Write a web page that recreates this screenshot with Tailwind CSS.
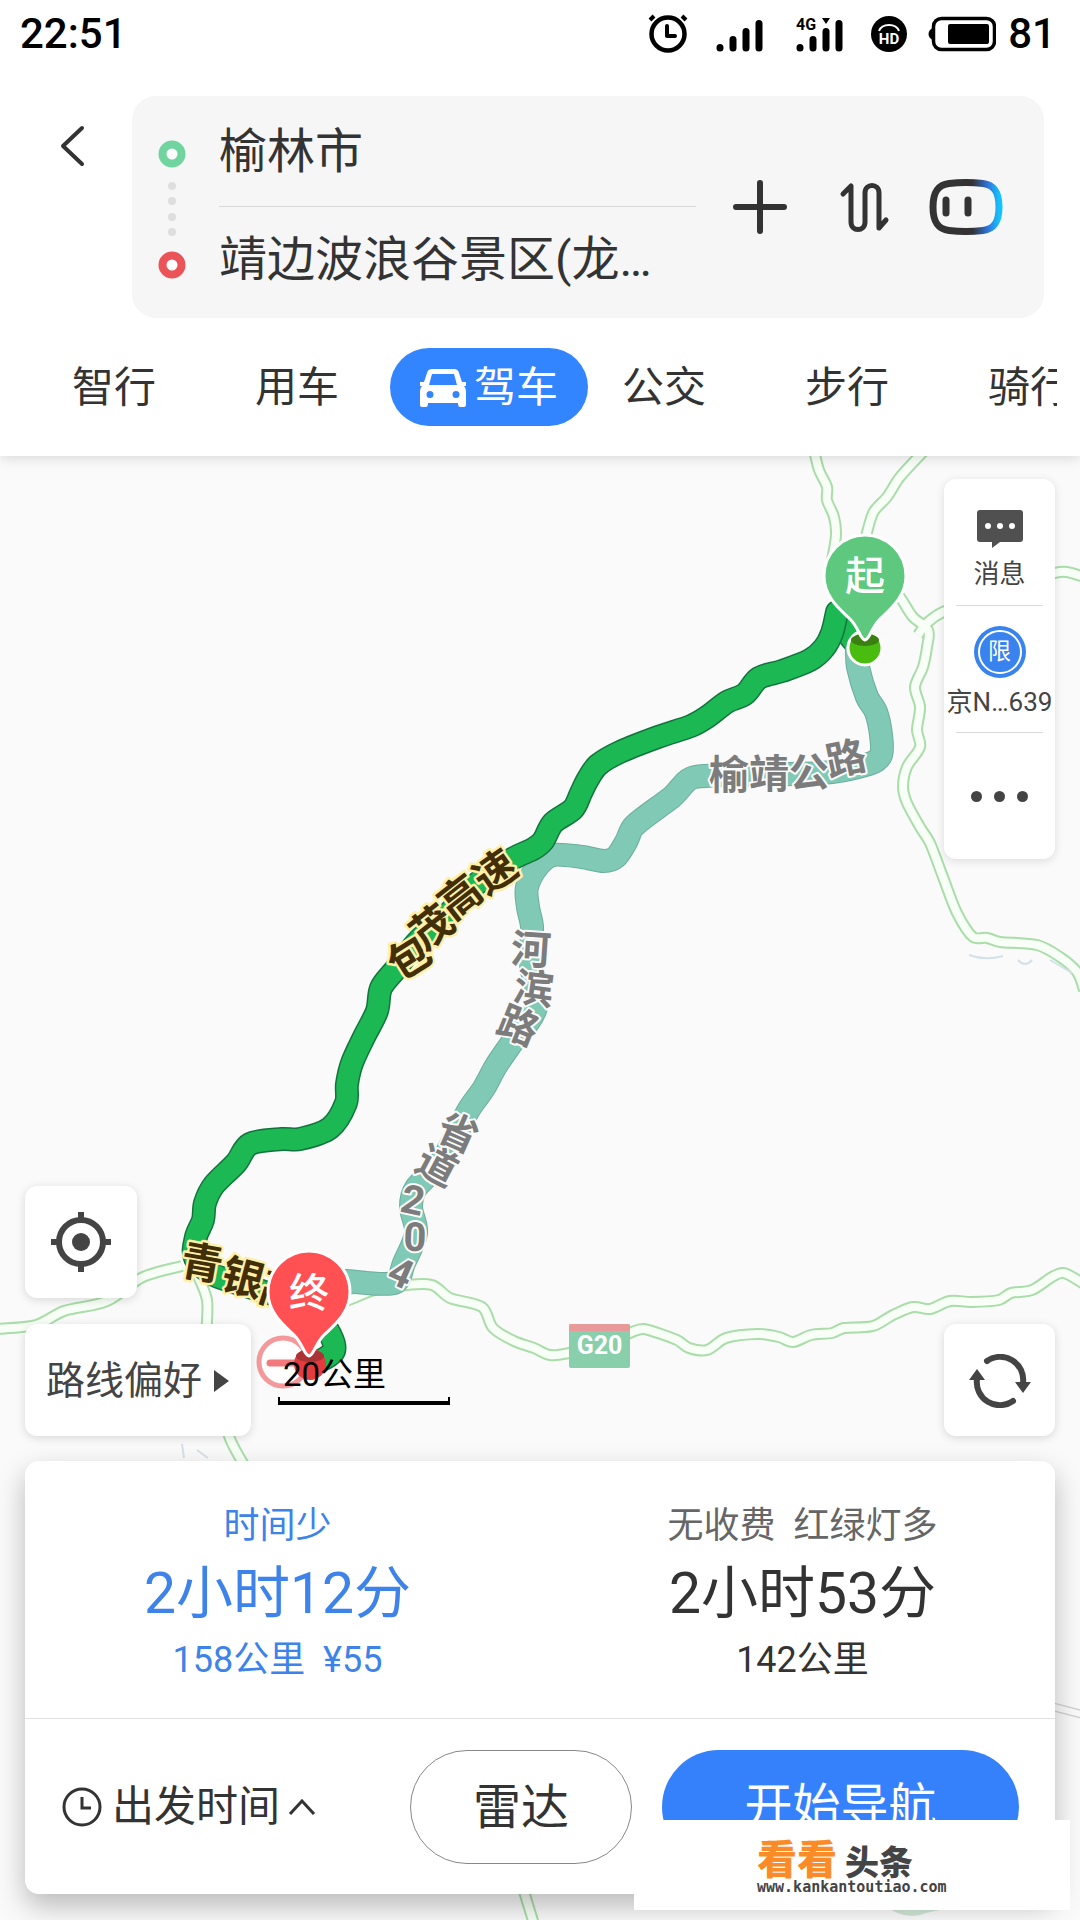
<!DOCTYPE html>
<html lang="zh-CN">
<head>
<meta charset="utf-8">
<meta name="viewport" content="width=device-width, initial-scale=1">
<title>驾车路线</title>
<script src="https://cdn.jsdelivr.net/npm/@tailwindcss/browser@4"></script>
</head>
<body class="bg-white font-[Roboto,'Noto_Sans_CJK_SC',sans-serif] text-[#333]">
<div class="relative flex min-h-screen flex-col overflow-hidden">

  <header class="relative z-10 bg-white pb-[30px] shadow-[0_2px_12px_rgba(0,0,0,0.14)]">
    <!-- status bar -->
    <div class="flex h-[66px] items-center pt-[2px] pr-[24px] pl-[20px] text-[42px] leading-none font-medium text-black">
      <time>22:51</time>
      <div class="ml-auto flex items-center">
        <svg class="mr-[28px] h-[40px] w-[40px]" viewBox="0 0 40 40" fill="none" stroke="#000"><circle cx="20" cy="20" r="16.500" stroke-width="4.500"/><path d="M19 12v10h8" stroke-width="4" stroke-linecap="round" stroke-linejoin="round"/><path d="M2 6l4-4M38 6l-4-4" stroke-width="4"/></svg>
        <svg class="mr-[33px] h-[40px] w-[47px]" viewBox="0 0 47 40" stroke="#000" stroke-width="7" stroke-linecap="round"><path d="M4 33.500v.5M17 25.500v8.500M30 17.500v16.500M43 9.500v24.500"/></svg>
        <svg class="mr-[28px] h-[40px] w-[47px]" viewBox="0 0 47 40"><path d="M4 33.500v.5M17 25.500v8.500M30 17.500v16.500M43 9.500v24.500" stroke="#000" stroke-width="7" stroke-linecap="round"/><path d="M26 4h8l-4 6z"/><text x="0" y="16" font-size="16" font-weight="700">4G</text></svg>
        <svg class="mr-[21px] h-[36px] w-[36px]" viewBox="0 0 36 36"><circle cx="18" cy="18" r="18"/><path d="M8 15c3-8 17-8 20 0" fill="none" stroke="#fff" stroke-width="2"/><text x="18" y="28" font-size="15" font-weight="700" fill="#fff" text-anchor="middle">HD</text></svg>
        <svg class="mr-[12px] h-[36px] w-[68px]" viewBox="0 0 68 36"><path d="M5 12c-6 2-6 10 0 12z"/><rect x="5.500" y="2.500" width="61" height="31" rx="8" fill="none" stroke="#000" stroke-width="3.500"/><rect x="20" y="8" width="41" height="20" rx="2"/></svg>
        <span>81</span>
      </div>
    </div>

    <!-- route endpoints -->
    <div class="mt-[30px] flex items-start pr-[36px]">
      <button aria-label="返回" class="flex h-[100px] w-[132px] items-center pl-[58px]"><svg class="h-[44px] w-[30px]" viewBox="0 0 30 44" fill="none" stroke="#333" stroke-width="4" stroke-linecap="round" stroke-linejoin="round"><path d="M24 4L5 22l19 18"/></svg></button>
      <div class="flex h-[222px] flex-1 items-center rounded-[24px] bg-[#f6f6f6] pr-[41px] pl-[24px]">
        <svg class="h-[150px] w-[32px] shrink-0" viewBox="0 0 32 150"><circle cx="16" cy="22" r="9.500" fill="#fff" stroke="#70d49f" stroke-width="8"/><g fill="#dedede"><circle cx="16" cy="54" r="4"/><circle cx="16" cy="69" r="4"/><circle cx="16" cy="85" r="4"/><circle cx="16" cy="100" r="4"/></g><circle cx="16" cy="133" r="9.500" fill="#fff" stroke="#ea5357" stroke-width="8"/></svg>
        <div class="ml-[31px] min-w-0 flex-1">
          <input aria-label="起点" value="榆林市" class="block h-[110px] w-full border-b border-[#d9d9d9] bg-transparent pb-[10px] text-[48px] outline-none">
          <input aria-label="终点" value="靖边波浪谷景区(龙…" class="block h-[110px] w-full bg-transparent pb-[14px] text-[48px] outline-none">
        </div>
        <button aria-label="添加途经点" class="ml-[36px]"><svg class="h-[56px] w-[56px]" viewBox="0 0 56 56" stroke="#333" stroke-width="6" stroke-linecap="round"><path d="M28 4v48M4 28h48"/></svg></button>
        <button aria-label="交换起终点" class="ml-[50px]"><svg class="h-[52px] w-[52px]" viewBox="0 0 52 52" fill="none" stroke="#333" stroke-width="5" stroke-linecap="round" stroke-linejoin="round"><path d="M5 13l8-8v36c0 10 14 10 14 0V12c0-10 14-10 14 0v35l7-8"/></svg></button>
        <button aria-label="语音助手" class="ml-[39px]"><svg class="h-[56px] w-[74px]" viewBox="0 0 74 56" fill="none"><defs><linearGradient id="ring"><stop offset=".6" stop-color="#333"/><stop offset=".83" stop-color="#2f73dc"/><stop offset="1" stop-color="#16c1fa"/></linearGradient></defs><path d="M20 4.500Q37 2.500 54 4.500C66 6 70 14 70 28s-4 22-16 23.500q-17 2-34 0C8 50 4 42 4 28S8 6 20 4.500z" stroke="url(#ring)" stroke-width="7"/><path d="M17 21v13M39 21v13" stroke="#333" stroke-width="7" stroke-linecap="round"/></svg></button>
      </div>
    </div>

    <!-- travel modes -->
    <nav class="mt-[30px] mr-[23px] flex h-[78px] items-center overflow-hidden pl-[72px] text-[42px] leading-none whitespace-nowrap">
      <div class="flex shrink-0 gap-[99px]"><button class="pt-[2px]">智行</button><button class="pt-[2px]">用车</button></div>
      <button class="ml-[51px] flex h-[78px] w-[198px] shrink-0 items-center justify-center gap-[8px] rounded-full bg-[#3385ff] pt-[2px] text-white">
        <svg class="h-[40px] w-[46px]" viewBox="0 0 46 40" fill="#fff"><path fill-rule="evenodd" d="M12 1h22q4 0 5 4l3 9h4v4h-2q2 2 2 5v14q0 2-2 2h-4q-2 0-2-4H8q0 4-2 4H3q-3 0-3-2V23q0-3 2-5H0v-4h4l3-9q1-4 5-4zm0 5L9 17h28L34 6zM10 23a3.500 3.500 0 100 7 3.500 3.500 0 000-7zm26 0a3.500 3.500 0 100 7 3.500 3.500 0 000-7z"/></svg>
        驾车</button>
      <div class="ml-[34px] flex shrink-0 gap-[99px]"><button class="pt-[2px]">公交</button><button class="pt-[2px]">步行</button><button class="pt-[2px]">骑行</button></div>
    </nav>
  </header>

  <main class="relative flex flex-1 flex-col bg-[#fafafa] px-[25px] pt-[23px] pb-[26px]">
    <svg class="absolute inset-0 h-full w-full" viewBox="0 456 1080 1464" preserveAspectRatio="xMidYMid slice" aria-label="路线地图">
      <defs>
        <g id="roads" fill="none" stroke-linejoin="round">
          <path data-curve d="M814 450L819 470 827 487 827 500 834 517 836 535 832 560"/>
          <path data-curve d="M925 450L900 477 887 497 873 513 864 545"/>
          <path data-curve d="M895 590L902 600 913 617 928 630 927 647 923 667 915 687 920 707 917 730 920 747 907 767 903 787 907 803 920 827 930 843 943 877 957 913 973 937 987 938 1000 942 1037 945 1060 957 1077 972 1084 990"/>
          <path data-curve d="M918 635L927 623 943 612 1000 590 1055 573 1067 572 1084 577"/>
          <path data-curve d="M-4 1329L36 1325 64 1311 107 1301 143 1277 182 1266"/>
          <path data-curve d="M196 1272L207 1300 207 1340 220 1400 229 1436 236 1451 250 1475"/>
          <path data-curve d="M310 1310L346 1301 375 1290 407 1285 432 1285 450 1298 482 1307 493 1328 514 1341 534 1348 550 1355 569 1353 600 1345 632 1332 644 1329 677 1340 689 1348 707 1350 726 1338 758 1334 779 1337 793 1342 811 1335 832 1333 844 1328 873 1326 893 1315 913 1307 930 1309 950 1301 971 1302 999 1300 1011 1293 1032 1290 1052 1277 1064 1273 1084 1284"/>
          <path d="M522 1885L534 1924"/>
        </g>
        <path data-curve id="fast" d="M837 612L832 633 824 648 810 660 782 671 759 678 745 694 727 702 707 717 691 726 658 737 620 752 598 765 588 779 581 793 573 809 553 823 543 841 533 849 514 858 474 886 450 912 419 940 395 970 381 988 377 1011 364 1037 352 1063 347 1084 346 1103 330 1128 300 1139 282 1139 250 1144 236 1163 214 1185 205 1203 203 1220 196 1237 195 1258 214 1275 264 1292 316 1315 331 1336 334 1351 322 1360"/>
        <path data-curve id="slow" d="M857 650L858 667 867 697 876 712 881 735 881 755 869 764 822 773 695 777 672 797 634 826 626 842 616 857 604 861 582 857 553 855 538 866 527 887 528 907 532 927 531 963 536 1007 511 1044 496 1066 484 1088 468 1111 443 1159 416 1188 411 1207 416 1233 404 1263 394 1283 346 1281"/>
      </defs>
      <use href="#roads" stroke="#a9dda9" stroke-width="12"/>
      <use href="#roads" stroke="#f8fff6" stroke-width="8"/>
      <path d="M1050 1706l34 9" stroke="#d2d2d2" stroke-width="9"/><path d="M1050 1706l34 9" stroke="#fafafa" stroke-width="6"/>
      <g fill="none" stroke="#d5e1ea" stroke-width="2"><path d="M969 955q16 6 34 1M1018 960q7 8 14 0M1050 960l22 13M182 1444l2 14M197 1450l11 8"/></g>
      <path d="M884 1905h72q-14 5-30 8-20 9-42-8z" fill="#cfe6d5"/>

      <g fill="none" stroke-linejoin="round" stroke-linecap="round">
        <path d="M850 615L848 636 858 648" stroke="#127b43" stroke-width="22"/><path d="M850 615L848 636 858 648" stroke="#1cb854" stroke-width="19"/>
        <use href="#slow" stroke="#6bae9e" stroke-width="24"/>
        <use href="#slow" stroke="#80c9b5" stroke-width="22"/>
        <use href="#fast" stroke="#12743d" stroke-width="24"/>
        <use href="#fast" stroke="#1cb854" stroke-width="21"/>
      </g>

      <g font-size="40" font-weight="700" fill="#7c7c7c" stroke="#fafafa" stroke-width="4" stroke-linejoin="round" paint-order="stroke" text-anchor="middle">
        <text transform="translate(729 775)" y="14">榆</text><text transform="translate(769 774)" y="14">靖</text><text transform="translate(809 773) rotate(-3)" y="14">公</text><text transform="translate(846 759) rotate(-12)" y="14">路</text>
        <text transform="translate(531 950) rotate(4)" y="14">河</text><text transform="translate(534 989) rotate(8)" y="14">滨</text><text transform="translate(518 1026) rotate(22)" y="14">路</text>
        <text transform="translate(458 1133) rotate(24)" y="14">省</text><text transform="translate(437 1166) rotate(28)" y="14">道</text><text transform="translate(413 1200) rotate(12)" y="14">2</text><text transform="translate(415 1237) rotate(2)" y="14">0</text><text transform="translate(401 1273) rotate(24)" y="14">4</text>
      </g>
      <g font-size="42" font-weight="700" fill="#422f07" stroke="#fff0a8" stroke-width="5" stroke-linejoin="round" paint-order="stroke" text-anchor="middle">
        <text transform="translate(409 958) rotate(-32)" y="15">包</text><text transform="translate(432 927) rotate(-38)" y="15">茂</text><text transform="translate(460 897) rotate(-38)" y="15">高</text><text transform="translate(495 872) rotate(-35)" y="15">速</text>
        <text transform="translate(202 1263) rotate(10)" y="15">青</text><text transform="translate(243 1278) rotate(15)" y="15">银</text><text transform="translate(281 1292) rotate(18)" y="15">高</text>
      </g>

      <rect x="569" y="1324" width="61" height="44" rx="2" fill="#89cfac"/><path d="M569 1331v-5q0-2 2-2h57q2 0 2 2v5z" fill="#e89999"/>
      <text x="599.500" y="1354" font-size="25" font-weight="700" fill="#fff" text-anchor="middle">G20</text>

      <!-- start pin -->
      <circle cx="865" cy="648" r="17" fill="#49bc10" stroke="#fff" stroke-width="3"/><ellipse cx="865" cy="640" rx="14" ry="6" fill="#397f12"/>
      <path d="M865 640c-5-1-6-12-15-21-8-8-26-21-26-43a41 41 0 0182 0c0 22-18 35-26 43-9 9-10 20-15 21z" fill="#5ec97e" stroke="#fff" stroke-width="3"/>
      <text x="865" y="590" font-size="40" font-weight="500" fill="#fff" text-anchor="middle">起</text>
      <!-- destination pin -->
      <circle cx="283" cy="1362" r="24" fill="#fff" stroke="#f3999b" stroke-width="5"/><path d="M270 1363h26" stroke="#f2797c" stroke-width="7" stroke-linecap="round"/>
      <circle cx="310" cy="1364" r="16" fill="#e43b3e"/><ellipse cx="310" cy="1356" rx="14" ry="6" fill="#a93335"/>
      <path d="M309 1356c-5-1-6-12-15-21-8-8-26-21-26-43a41 41 0 0182 0c0 22-18 35-26 43-9 9-10 20-15 21z" fill="#ff5054" stroke="#fff" stroke-width="3"/>
      <text x="309" y="1307" font-size="40" font-weight="500" fill="#fff" text-anchor="middle">终</text>
    </svg>

    <!-- side tools -->
    <aside class="relative flex h-[380px] w-[111px] flex-col self-end rounded-[12px] bg-white px-[12px] text-[26px] leading-[32px] text-[#444] shadow-[0_2px_10px_rgba(0,0,0,0.12)]">
      <button class="flex h-[127px] flex-col items-center border-b border-[#d9d9d9] pt-[31px]">
        <svg class="h-[38px] w-[46px]" viewBox="0 0 46 38"><path d="M3 0h40q3 0 3 3v26q0 3-3 3H23l-8 6v-6H3q-3 0-3-3V3q0-3 3-3z" fill="#505050"/><g fill="#fff"><circle cx="11" cy="16" r="3"/><circle cx="23" cy="16" r="3"/><circle cx="35" cy="16" r="3"/></g></svg>
        <span class="mt-[10px]">消息</span>
      </button>
      <button class="flex h-[127px] flex-col items-center border-b border-[#d9d9d9] pt-[20px]">
        <span class="flex h-[52px] w-[52px] items-center justify-center rounded-full bg-[#3883ee] p-[4px] text-white"><span class="flex h-[44px] w-[44px] items-center justify-center rounded-full border-2 border-white text-[23px]">限</span></span>
        <span class="mt-[8px] whitespace-nowrap">京N…639</span>
      </button>
      <button aria-label="更多" class="flex flex-1 items-center justify-center gap-[12px]"><i class="h-[11px] w-[11px] rounded-full bg-[#444]"></i><i class="h-[11px] w-[11px] rounded-full bg-[#444]"></i><i class="h-[11px] w-[11px] rounded-full bg-[#444]"></i></button>
    </aside>

    <div class="relative mt-auto flex flex-col items-start">
      <button aria-label="定位" class="flex h-[112px] w-[112px] items-center justify-center rounded-[12px] bg-white shadow-[0_2px_10px_rgba(0,0,0,0.14)]"><svg class="h-[60px] w-[60px]" viewBox="0 0 60 60" fill="none" stroke="#444" stroke-width="6"><circle cx="30" cy="30" r="22"/><circle cx="30" cy="30" r="9" fill="#444" stroke="none"/><path d="M30 0v8M30 52v8M0 30h8M52 30h8"/></svg></button>
      <div class="mt-[26px] flex w-full items-end">
        <button class="flex h-[112px] w-[226px] items-center justify-center gap-[11px] rounded-[12px] bg-white pt-[2px] text-[39px] text-[#444] shadow-[0_2px_10px_rgba(0,0,0,0.14)]">路线偏好<svg class="h-[24px] w-[17px]" viewBox="0 0 17 24"><path d="M1 1v22l15-11z" fill="#444"/></svg></button>
        <div class="mb-[31px] ml-[27px] w-[172px] text-black">
          <span class="block pl-[5px] text-[33px] leading-[44px]">20公里</span>
          <span class="block h-[8px] border-x-2 border-b-4 border-black"></span>
        </div>
        <button aria-label="刷新" class="ml-auto flex h-[112px] w-[111px] items-center justify-center rounded-[12px] bg-white pt-[2px] shadow-[0_2px_10px_rgba(0,0,0,0.14)]"><svg class="h-[54px] w-[62px]" viewBox="0 0 62 54" fill="none" stroke="#444" stroke-width="6" stroke-linecap="round"><path d="M18 7A23 23 0 0154 29M44 47A23 23 0 018 25"/><path d="M46 28h16l-8 11zM0 26h16L8 15z" fill="#444" stroke="none"/></svg></button>
      </div>
    </div>

    <!-- route summary -->
    <section class="relative mt-[25px] rounded-[14px] bg-white shadow-[0_12px_28px_rgba(0,0,0,0.26)]">
      <div class="grid grid-cols-2 gap-[20px] border-b border-[#e2e2e2] pt-[39px] pb-[34px]">
        <button class="block text-center text-[36px] leading-[48px] text-[#3d83e9]">
          <span class="block leading-[52px]">时间少</span><span class="block text-[57px] leading-[84px]">2小时12分</span><span class="block">158公里&nbsp; ¥55</span>
        </button>
        <button class="block text-center text-[36px] leading-[48px] text-[#333]">
          <span class="block leading-[52px] text-[#666]">无收费&nbsp; 红绿灯多</span><span class="block text-[57px] leading-[84px]">2小时53分</span><span class="block">142公里</span>
        </button>
      </div>
      <div class="flex h-[175px] items-center pr-[36px] pl-[37px]">
        <button class="flex items-center text-[42px] whitespace-nowrap">
          <svg class="mr-[10px] h-[40px] w-[40px]" viewBox="0 0 40 40" fill="none" stroke="#333" stroke-width="3"><circle cx="20" cy="20" r="18"/><path d="M20 10v11h9"/></svg>出发时间<svg class="ml-[8px] h-[16px] w-[28px]" viewBox="0 0 28 16" fill="none" stroke="#333" stroke-width="3"><path d="M2 15L14 2l12 13"/></svg>
        </button>
        <button class="ml-auto h-[114px] w-[222px] rounded-full border border-[#888] pt-[2px] text-[48px]">雷达</button>
        <button class="ml-[30px] h-[114px] w-[357px] rounded-full bg-[#3581fb] text-[48px] text-white">开始导航</button>
      </div>
    </section>
  </main>

  <!-- site badge over the lower right corner -->
  <a href="#" class="absolute right-[10px] bottom-[10px] z-20 flex h-[90px] w-[436px] flex-col bg-white pt-[28px] pl-[123px] text-[#444]">
    <span class="flex h-[30px] items-end gap-[8px] font-bold"><b class="text-[40px] leading-[34px] font-black text-[#fb8b27]">看看</b><b class="text-[34px] leading-[30px]">头条</b></span>
    <span class="font-['DejaVu_Sans_Mono',monospace] text-[15px] leading-[18px] font-bold">www.kankantoutiao.com</span>
  </a>
</div>
<script>
  // Redraw each polyline of road points as a Catmull-Rom curve.
  document.querySelectorAll('path[data-curve]').forEach(path => {
    const n = path.getAttribute('d').match(/-?\d+/g).map(Number);
    const p = [];
    for (let i = 0; i < n.length; i += 2) p.push([n[i], n[i + 1]]);
    let d = 'M' + p[0];
    for (let i = 0; i < p.length - 1; i++) {
      const a = p[i - 1] || p[i], b = p[i], c = p[i + 1], e = p[i + 2] || c;
      const len = Math.hypot(c[0] - b[0], c[1] - b[1]);
      const k1 = Math.min(1, 2 * len / Math.hypot(c[0] - a[0], c[1] - a[1])) / 6;
      const k2 = Math.min(1, 2 * len / Math.hypot(e[0] - b[0], e[1] - b[1])) / 6;
      d += `C${b[0] + (c[0] - a[0]) * k1} ${b[1] + (c[1] - a[1]) * k1} ${c[0] - (e[0] - b[0]) * k2} ${c[1] - (e[1] - b[1]) * k2} ${c[0]} ${c[1]}`;
    }
    path.setAttribute('d', d);
  });
</script>
</body>
</html>
